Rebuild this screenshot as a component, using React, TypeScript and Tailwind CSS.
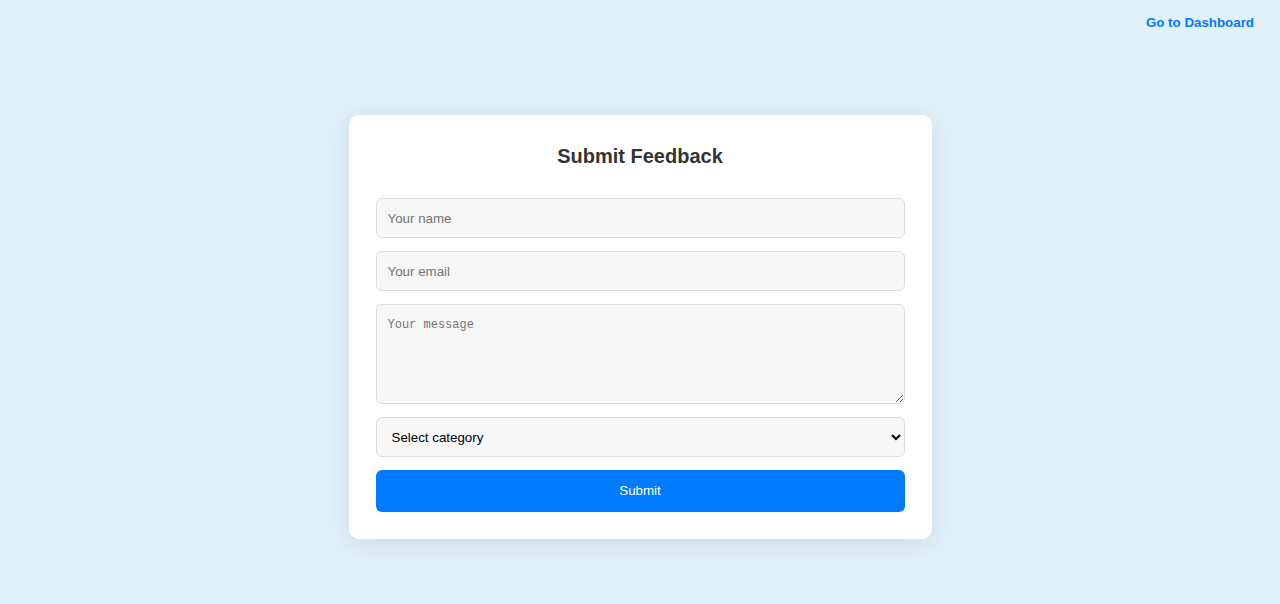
import React, { useState } from "react";

export default function App() {
  const [name, setName] = useState("");
  const [email, setEmail] = useState("");
  const [message, setMessage] = useState("");
  const [category, setCategory] = useState("");

  const handleSubmit = (e: React.FormEvent) => {
    e.preventDefault();
  };

  return (
    <div className="min-h-screen bg-[#e1f1fc] font-['Liberation_Sans',Arial,sans-serif]">
      <div className="flex h-[46px] items-center justify-end pr-[26px]">
        <a href="#" className="text-[13.33px] font-bold text-[#007bff]">
          Go to Dashboard
        </a>
      </div>

      <div className="mx-auto mt-[69px] w-[583px] rounded-[10px] bg-white p-[27px] shadow-[0_4px_24px_rgba(0,0,0,0.1)]">
        <h2 className="mb-[28px] text-center text-[20px] font-bold leading-[28px] text-[#333]">
          Submit Feedback
        </h2>

        <form onSubmit={handleSubmit} className="flex flex-col gap-[13px]">
          <input
            type="text"
            value={name}
            onChange={(e) => setName(e.target.value)}
            placeholder="Your name"
            className="h-[40px] w-full rounded-[6px] border border-[#dddddd] bg-[#f7f7f7] px-[11px] text-[13.33px] text-black outline-none placeholder:text-[#757575]"
          />
          <input
            type="email"
            value={email}
            onChange={(e) => setEmail(e.target.value)}
            placeholder="Your email"
            className="h-[40px] w-full rounded-[6px] border border-[#dddddd] bg-[#f7f7f7] px-[11px] text-[13.33px] text-black outline-none placeholder:text-[#757575]"
          />
          <textarea
            value={message}
            onChange={(e) => setMessage(e.target.value)}
            placeholder="Your message"
            className="h-[100px] w-full rounded-[6px] border border-[#dddddd] bg-[#f7f7f7] px-[11px] py-[11px] font-['Liberation_Mono',monospace] text-[12px] text-black outline-none placeholder:text-[#757575]"
          />
          <select
            value={category}
            onChange={(e) => setCategory(e.target.value)}
            className="h-[40px] w-full rounded-[6px] border border-[#dddddd] bg-[#f7f7f7] px-[11px] text-[13.33px] text-black outline-none"
          >
            <option value="">Select category</option>
            <option value="bug">Bug</option>
            <option value="feature">Feature request</option>
            <option value="other">Other</option>
          </select>
          <button
            type="submit"
            className="h-[42px] w-full rounded-[6px] bg-[#007bff] text-[13.33px] text-white"
          >
            Submit
          </button>
        </form>
      </div>
    </div>
  );
}
